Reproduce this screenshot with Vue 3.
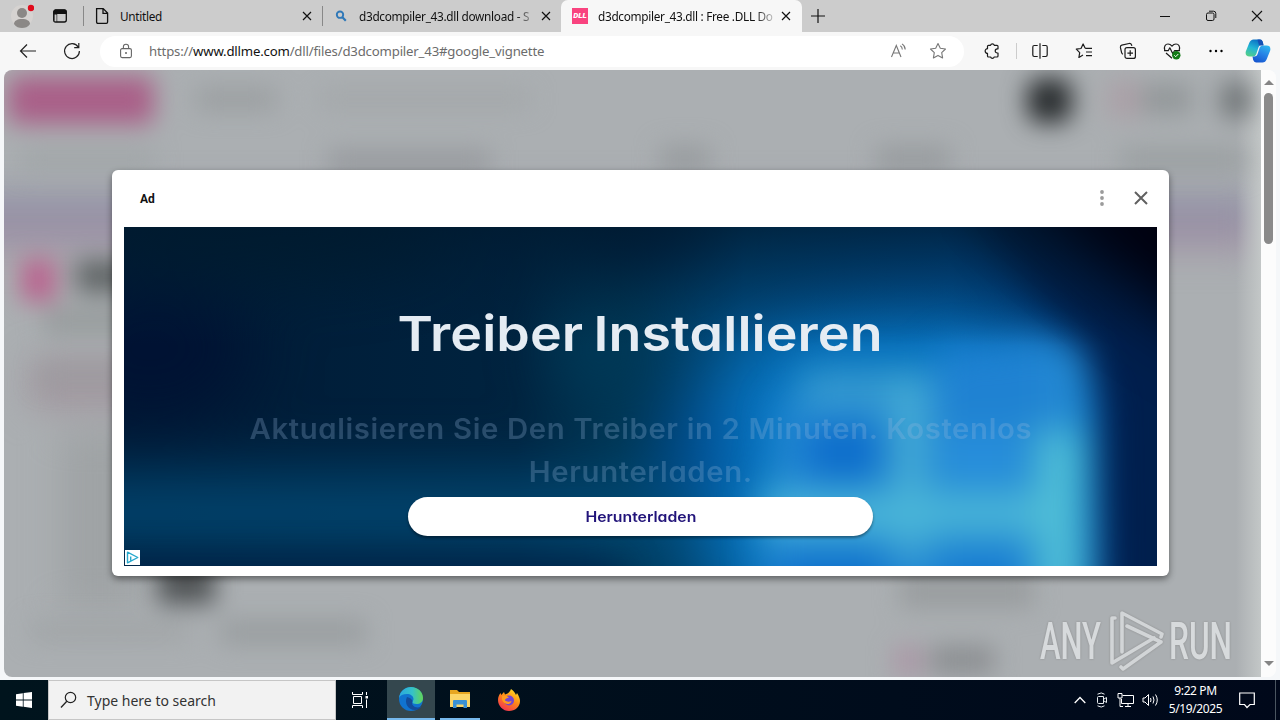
<script setup>
import { ref } from 'vue'

const tabs = ref([
  { id: 1, title: 'Untitled', icon: 'file', active: false },
  { id: 2, title: 'd3dcompiler_43.dll download - S', icon: 'search', active: false },
  { id: 3, title: 'd3dcompiler_43.dll : Free .DLL Do', icon: 'dll', active: true }
])

const adOpen = ref(true)

function closeTab(id) {
  tabs.value = tabs.value.filter(t => t.id !== id)
}
</script>

<template>
  <div class="desktop">
    <header class="tabbar">
      <div class="profile">
        <svg width="24" height="26" viewBox="0 0 24 26">
          <circle cx="12" cy="13" r="11" fill="#d6d3d1" />
          <circle cx="12" cy="10" r="5" fill="#8b8886" />
          <path d="M4 21c0-3 3-5 8-5s8 2 8 5c-2 3-5 4-8 4s-6-1-8-4z" fill="#8b8886" />
          <circle cx="21" cy="5" r="3.2" fill="#e00b1c" />
        </svg>
      </div>
      <svg class="workspaces" width="16" height="16" viewBox="0 0 16 16">
        <rect x="1.7" y="2" width="12.6" height="12" rx="2" fill="none" stroke="#111" stroke-width="1.3" />
        <path d="M1.5 3.5q0-2 2-2h9q2 0 2 2V6h-13zM2 6h3.2v8H3.5Q2 14 2 12z" fill="#111" />
        <path d="M2.6 6.5h2v6.8h-2z" fill="#ccc" />
      </svg>
      <div class="tab-divider"></div>
      <div v-for="tab in tabs" :key="tab.id" class="tab" :class="[tab.icon, { active: tab.active }]">
        <svg v-if="tab.icon === 'file'" class="tab-icon" width="16" height="18" viewBox="0 0 16 18">
          <path d="M2.6 1.6h6.6l4.4 4.5v9q0 1.3-1.3 1.3H3.9q-1.3 0-1.3-1.3zM9 1.8v4.5h4.4" fill="none" stroke="#111" stroke-width="1.3" />
        </svg>
        <svg v-else-if="tab.icon === 'search'" class="tab-icon" width="16" height="16" viewBox="0 0 16 16">
          <circle cx="7" cy="6.7" r="3.2" fill="none" stroke="#2f78b8" stroke-width="1.9" />
          <path d="M9.4 9.2l3.4 3.5" stroke="#2f78b8" stroke-width="2.2" />
        </svg>
        <span v-else class="tab-icon dll-badge">DLL</span>
        <span class="tab-title">{{ tab.title }}</span>
        <button class="tab-close" @click="closeTab(tab.id)">
          <svg width="10" height="10" viewBox="0 0 10 10"><path d="M1 1l8 8M9 1L1 9" stroke="#111" stroke-width="1.2" /></svg>
        </button>
      </div>
      <svg class="new-tab" width="14" height="14" viewBox="0 0 14 14"><path d="M7 0v14M0 7h14" stroke="#111" stroke-width="1.2" /></svg>
      <div class="window-controls">
        <svg width="12" height="12" viewBox="0 0 12 12"><path d="M1 6.5h10" stroke="#111" /></svg>
        <svg width="12" height="12" viewBox="0 0 12 12">
          <rect x="1.5" y="3" width="7.5" height="7.5" rx="1.5" fill="none" stroke="#111" />
          <path d="M4 1.2h4.5q2.3 0 2.3 2.3V8" fill="none" stroke="#111" />
        </svg>
        <svg width="12" height="12" viewBox="0 0 12 12"><path d="M1 1l10 10M11 1L1 11" stroke="#111" stroke-width="1.1" /></svg>
      </div>
    </header>

    <nav class="toolbar">
      <svg class="nav-back" width="18" height="16" viewBox="0 0 18 16"><path d="M17 8H1.5M8 1.5L1.5 8 8 14.5" fill="none" stroke="#222" stroke-width="1.2" /></svg>
      <svg class="nav-reload" width="18" height="18" viewBox="0 0 18 18"><path d="M15.3 5.2A7.4 7.4 0 1 0 16.4 9M15.8 1v4.6h-4.6" fill="none" stroke="#222" stroke-width="1.2" /></svg>
      <div class="address">
        <svg class="lock" width="14" height="16" viewBox="0 0 14 16">
          <rect x="1.6" y="5.6" width="10.8" height="9" rx="1.5" fill="none" stroke="#666" stroke-width="1.1" />
          <path d="M4.4 5.6V3.8a2.6 2.6 0 0 1 5.2 0v1.8" fill="none" stroke="#666" stroke-width="1.1" />
          <circle cx="7" cy="10" r="1" fill="#666" />
        </svg>
        <span class="url">https://<b>www.dllme.com</b>/dll/files/d3dcompiler_43#google_vignette</span>
        <svg class="read-aloud" width="17" height="16" viewBox="0 0 17 16">
          <path d="M1.5 14L6.3 2.5 11 14M3.2 10h6.2M10.3 2.8q2 1.2 2 3.6M12 .9q3.2 2 3.2 5.6" fill="none" stroke="#777" stroke-width="1.1" />
        </svg>
        <svg width="18" height="18" viewBox="0 0 18 18">
          <path d="M9 1.5l2.3 4.8 5.2.7-3.8 3.7.9 5.2L9 13.4l-4.6 2.5.9-5.2L1.5 7l5.2-.7z" fill="none" stroke="#777" stroke-width="1.1" stroke-linejoin="round" />
        </svg>
      </div>
      <div class="tools">
        <svg width="18" height="18" viewBox="0 0 18 18">
          <path d="M5.5 3.3h2a2 2 0 0 1 3.8 0h2.7q1 0 1 1v2.5h-.7a2 2 0 0 0 0 4.2h.7v3q0 1-1 1h-2.8a1.9 1.9 0 0 1-3.6 0H5.5q-1 0-1-1v-2.6a2.1 2.1 0 0 1 0-4.7V4.3q0-1 1-1z" fill="none" stroke="#1b1b1b" stroke-width="1.2" stroke-linejoin="round" />
        </svg>
        <i class="sep"></i>
        <svg width="18" height="18" viewBox="0 0 18 18">
          <path d="M6.7 3.5H3.2q-1.4 0-1.4 1.4v8.2q0 1.4 1.4 1.4h3.5M11.3 3.5h3.5q1.4 0 1.4 1.4v8.2q0 1.4-1.4 1.4h-3.5M9 1.2v15.6" fill="none" stroke="#1b1b1b" stroke-width="1.2" />
        </svg>
        <svg width="18" height="18" viewBox="0 0 18 18">
          <path d="M10.2 6.2L8.1 2 6 6.5l-4.7.7 3.4 3.4-.8 4.9L8 13.1M10.2 6.3H17M11 10h6M11 13.6h6" fill="none" stroke="#1b1b1b" stroke-width="1.2" stroke-linejoin="round" />
        </svg>
        <svg width="18" height="18" viewBox="0 0 18 18">
          <rect x="6" y="5.6" width="10.4" height="10.8" rx="2" fill="none" stroke="#1b1b1b" stroke-width="1.2" />
          <path d="M11.2 8.3v5.6M8.4 11.1H14M3.9 12.2Q3 11.8 2.6 10.6L1.4 5.4Q1.2 3.6 2.8 3.1L10 1.5q2-.3 2.6 1.4l.2.9" fill="none" stroke="#1b1b1b" stroke-width="1.2" />
        </svg>
        <svg width="18" height="18" viewBox="0 0 18 18">
          <path d="M1.8 8C.6 4.6 2.4 2 5 2q2.3 0 4 2.2Q10.7 2 13 2c2.7 0 4.4 2.6 3.2 6M1 8.7h4.2L6.8 5.8l3 6 1.7-3.1H17M3 11l6 5.2" fill="none" stroke="#1b1b1b" stroke-width="1.2" stroke-linejoin="round" />
          <circle cx="13.3" cy="13.2" r="4.2" fill="#137b16" />
          <path d="M11.3 13.3l1.4 1.4 2.6-2.7" fill="none" stroke="#fff" />
        </svg>
        <svg width="18" height="18" viewBox="0 0 18 18"><circle cx="3.5" cy="9" r="1.2" /><circle cx="9" cy="9" r="1.2" /><circle cx="14.5" cy="9" r="1.2" /></svg>
      </div>
      <svg class="copilot" width="26" height="24" viewBox="0 0 26 24">
        <defs>
          <linearGradient id="cpA" x1="0.6" y1="0" x2="0.2" y2="1"><stop offset="0" stop-color="#0a6fc4" /><stop offset=".5" stop-color="#22b5d6" /><stop offset="1" stop-color="#54cf86" /></linearGradient>
          <linearGradient id="cpB" x1="0.8" y1="0" x2="0.3" y2="1"><stop offset="0" stop-color="#2fb6ee" /><stop offset=".5" stop-color="#2682e6" /><stop offset="1" stop-color="#1656cf" /></linearGradient>
        </defs>
        <path d="M8.5 .5H15q2 0 2.8 2.4L18.5 6h-2.3q-2 0-2.7 2.2l-2.3 7Q10.3 17.5 8 17.5H4.5Q-.2 17.5 .8 12.5L4.2 4Q5.6 .5 8.5 .5z" fill="url(#cpA)" />
        <path d="M17.5 23.5H11q-2 0-2.8-2.4L7.5 17.5h1.8q2.5 0 3.2-2.2l2.3-7Q15.6 6.5 18 6.5h3.5q4.7 0 3.7 5L21.8 20q-1.4 3.5-4.3 3.5z" fill="url(#cpB)" />
        <path d="M12.5 .5H15q2 0 2.8 2.4L18.5 6.5H14z" fill="#1551b5" />
      </svg>
    </nav>

    <main class="viewport">
      <section class="page">
        <!-- out-of-focus page behind the vignette -->
        <svg class="backdrop" width="1257" height="607" viewBox="4 70 1257 607">
          <defs>
            <filter id="soft" x="-20%" y="-100%" width="140%" height="300%" color-interpolation-filters="sRGB"><feGaussianBlur stdDeviation="12.5" /></filter>
            <filter id="soft2" x="-20%" y="-100%" width="140%" height="300%" color-interpolation-filters="sRGB"><feGaussianBlur stdDeviation="18" /></filter>
            <linearGradient id="edge"><stop offset="0" stop-color="#c3c7c7" stop-opacity="0" /><stop offset="1" stop-color="#c3c7c7" /></linearGradient>
          </defs>
          <rect x="4" y="70" width="1257" height="607" fill="#abafb2" />
          <g filter="url(#soft2)">
            <rect x="-60" y="194" width="1320" height="30" fill="#9190a5" />
            <rect x="-60" y="224" width="1320" height="26" fill="#a092a5" />
            <rect x="30" y="360" width="160" height="48" fill="#a1979f" />
            <rect x="60" y="430" width="80" height="180" fill="#9fa3a5" />
          </g>
          <rect x="1236" y="70" width="25" height="607" fill="url(#edge)" />
          <g filter="url(#soft)">
            <rect x="8" y="76" width="146" height="48" rx="8" fill="#a95f88" />
            <rect x="196" y="88" width="80" height="22" fill="#9a9ea0" />
            <rect x="320" y="90" width="210" height="18" fill="#a3a7a9" />
            <rect x="20" y="150" width="135" height="20" fill="#a0a5a7" />
            <rect x="328" y="150" width="162" height="26" fill="#989b9f" />
            <rect x="660" y="146" width="50" height="28" fill="#989c9f" />
            <rect x="876" y="146" width="74" height="28" fill="#989c9f" />
            <rect x="1120" y="148" width="125" height="24" fill="#9a9fa1" />
            <rect x="1027" y="78" width="45" height="45" rx="14" fill="#2a2e30" />
            <rect x="1108" y="80" width="32" height="38" fill="#aba0a7" />
            <rect x="1142" y="84" width="50" height="30" fill="#929799" />
            <rect x="1222" y="83" width="28" height="34" fill="#6c7173" />
            <rect x="21" y="259" width="35" height="42" fill="#b9648f" />
            <rect x="76" y="260" width="110" height="32" fill="#5f6465" />
            <rect x="44" y="306" width="115" height="30" fill="#989d9e" />
            <rect x="40" y="366" width="90" height="18" fill="#9c9b9f" />
            <rect x="158" y="562" width="57" height="42" fill="#515557" />
            <rect x="30" y="622" width="160" height="18" fill="#a0a4a6" />
            <rect x="220" y="620" width="146" height="24" fill="#989d9f" />
            <rect x="900" y="574" width="134" height="34" fill="#999d9f" />
            <rect x="894" y="646" width="28" height="30" fill="#ab97a6" />
            <rect x="930" y="646" width="64" height="28" fill="#8b8e91" />
          </g>
        </svg>

        <article v-if="adOpen" class="vignette">
          <div class="vignette-head">
            <span class="ad-label">Ad</span>
            <svg class="kebab" width="4" height="16" viewBox="0 0 4 16" fill="#9b9b9b"><circle cx="2" cy="2" r="1.9" /><circle cx="2" cy="8" r="1.9" /><circle cx="2" cy="14" r="1.9" /></svg>
            <button class="ad-close" @click="adOpen = false">
              <svg width="14" height="14" viewBox="0 0 14 14"><path d="M1 1l12 12M13 1L1 13" stroke="#606060" stroke-width="2" /></svg>
            </button>
          </div>
          <div class="creative">
            <svg class="artwork" width="1033" height="339" viewBox="124 227 1033 339">
              <defs>
                <linearGradient id="base"><stop offset="0" stop-color="#001a35" /><stop offset=".38" stop-color="#00233f" /><stop offset=".48" stop-color="#003553" /><stop offset=".6" stop-color="#004c80" /><stop offset=".8" stop-color="#005094" /><stop offset="1" stop-color="#00205a" /></linearGradient>
                <filter id="b35" x="-100%" y="-100%" width="300%" height="300%" color-interpolation-filters="sRGB"><feGaussianBlur stdDeviation="34" /></filter>
                <filter id="b16" x="-50%" y="-50%" width="200%" height="200%" color-interpolation-filters="sRGB"><feGaussianBlur stdDeviation="18" /></filter>
                <linearGradient id="shade" x1="0" y1="0" x2="0" y2="1"><stop offset="0" stop-color="#001a30" stop-opacity=".75" /><stop offset=".35" stop-color="#001f3a" stop-opacity="0" /></linearGradient>
              </defs>
              <rect x="124" y="227" width="1033" height="339" fill="url(#base)" />
              <g filter="url(#b35)">
                <ellipse cx="150" cy="350" rx="100" ry="70" fill="#001233" />
                <ellipse cx="260" cy="230" rx="180" ry="40" fill="#001c2b" />
                <ellipse cx="640" cy="225" rx="80" ry="24" fill="#000d2b" />
                <rect x="40" y="480" width="680" height="66" fill="#014d7a" />
                <ellipse cx="600" cy="350" rx="40" ry="60" fill="#003a58" />
                <polygon points="700,400 780,330 900,310 1000,320 1090,370 1090,600 720,600" fill="#0876c2" />
                <ellipse cx="700" cy="450" rx="30" ry="50" fill="#004a90" />
              </g>
              <g filter="url(#b16)">
                <rect x="60" y="564" width="560" height="40" fill="#00254d" />
                <polygon points="780,400 900,380 1030,335 1085,350 1096,640 755,640" fill="#2489d2" />
                <rect x="800" y="370" width="130" height="38" fill="#379bd0" />
                <rect x="807" y="426" width="72" height="54" fill="#0c6ccb" />
                <rect x="894" y="380" width="32" height="175" fill="#48afd5" />
                <rect x="940" y="345" width="105" height="80" fill="#1f82d2" />
                <rect x="940" y="435" width="80" height="45" fill="#278edc" />
                <rect x="760" y="492" width="320" height="42" fill="#4ab6d8" />
                <rect x="1036" y="430" width="46" height="180" fill="#50bfd6" />
                <rect x="780" y="556" width="105" height="50" fill="#0c6ecb" />
                <rect x="940" y="558" width="80" height="50" fill="#1479d2" />
                <polygon points="950,190 1210,190 1210,640 1112,640 1108,400 1080,335 1030,285" fill="#001f4d" />
              </g>
              <rect x="124" y="227" width="1033" height="339" fill="url(#shade)" />
              <g filter="url(#b35)"><polygon points="990,170 1260,170 1260,370 1150,300" fill="#00000e" /></g>
            </svg>
            <div class="creative-copy">
              <h1>Treiber Installieren</h1>
              <p><span class="line">Aktualisieren Sie Den Treiber in 2 Minuten. Kostenlos</span><span class="line">Herunterladen.</span></p>
              <button class="cta"><span>Herunterladen</span></button>
            </div>
            <span class="adchoices">
              <svg width="15" height="15" viewBox="0 0 15 15"><path d="M2.5 2.2v10.6L12.8 7.5zM5.7 6.5v4" fill="none" stroke="#27a9cd" stroke-width="1.4" stroke-linejoin="round" /></svg>
            </span>
          </div>
        </article>

        <svg class="watermark" width="200" height="66" viewBox="1036 608 200 66">
          <g fill="#dfe2e4" font-family="Roboto, sans-serif" font-weight="500" font-size="51">
            <text x="1040" y="659" textLength="61" lengthAdjust="spacingAndGlyphs">ANY</text>
            <text x="1169" y="659" textLength="63" lengthAdjust="spacingAndGlyphs">RUN</text>
          </g>
          <g fill="none" stroke="#d9dcde" stroke-width="3.6" stroke-linejoin="round" stroke-linecap="round">
            <path d="M1122 652V613l40 21-1 3M1127 626l34 16-38 27-2-2" />
            <path d="M1115 618l-3 0V663l42-25" />
          </g>
        </svg>
      </section>
      <div class="scrollbar">
        <i class="arrow up"></i>
        <i class="thumb"></i>
        <i class="arrow down"></i>
      </div>
    </main>

    <footer class="taskbar">
      <div class="start">
        <svg width="16" height="16" viewBox="0 0 16 16" fill="#fff"><path d="M0 2.2l6.8-1v6.4H0zM7.6 1.1L16 0v7.6H7.6zM0 8.4h6.8v6.4L0 13.8zM7.6 8.4H16V16l-8.4-1.2z" /></svg>
      </div>
      <div class="search-box">
        <svg width="17" height="18" viewBox="0 0 17 18"><circle cx="10.5" cy="6.5" r="5.2" fill="none" stroke="#222" stroke-width="1.2" /><path d="M6.8 10.3L1 16.5" stroke="#222" stroke-width="1.3" /></svg>
        <span>Type here to search</span>
      </div>
      <div class="task">
        <svg width="18" height="16" viewBox="0 0 18 16" fill="none" stroke="#fff">
          <path d="M1.5 0v2.5h10V0M1.5 16v-2.5h10V16M2.5 4.5h8v7h-8zM15.5 0v3M15.5 7.5V16" /><rect x="14.5" y="4" width="2.5" height="2.5" fill="#fff" stroke="none" />
        </svg>
      </div>
      <div class="task edge current">
        <svg width="26" height="26" viewBox="0 0 26 26">
          <defs><linearGradient id="edgeTop"><stop offset="0" stop-color="#2aa7df" /><stop offset=".55" stop-color="#35c1c9" /><stop offset="1" stop-color="#63d557" /></linearGradient></defs>
          <circle cx="13" cy="13" r="12" fill="#1073cf" />
          <path d="M1 12C2 5 7 1 13 1c7 0 12 5 12 11 0 4-3 6-6.5 6-3 0-4-1-4-2 0-.8 1-1.2 1-3 0-3-3-5-6.5-5C5 8 2 9.5 1 12z" fill="url(#edgeTop)" />
          <path d="M9 11c-3 6 1 13 8 13 3 0 5-1.5 6.5-3.5C18 23 12.5 20 14.5 15q-1-3-5.5-4z" fill="#134c9a" />
        </svg>
      </div>
      <div class="task explorer running">
        <svg width="22" height="20" viewBox="0 0 22 20">
          <path d="M1 1h7l2 2h11v15H1z" fill="#e7a621" /><path d="M1 5h20v13H1z" fill="#fcd567" />
          <path d="M4 12q0-1 1-1h12q1 0 1 1v7h-3.5v-3.5h-7V19H4z" fill="#3b91d3" />
        </svg>
      </div>
      <div class="task firefox">
        <svg width="24" height="24" viewBox="0 0 24 24">
          <defs><linearGradient id="fox" x1=".8" y1="0" x2=".2" y2="1"><stop offset="0" stop-color="#ffe226" /><stop offset=".45" stop-color="#ff8a16" /><stop offset="1" stop-color="#f22c56" /></linearGradient></defs>
          <path d="M14 1c3 2 4 4 5 6l1-2c2 3 3 6 3 8 0 6-5 10-11 10S1 18 1 12c0-3 1-5 2.5-7l.8 2L7 4l1 2.5c2-.5 4.5-1.5 6-5.5z" fill="url(#fox)" />
          <circle cx="12" cy="12.5" r="5" fill="#7445d0" /><path d="M5 8c3-1 5 0 7 1.5-2 1-4 1-4 2.8 2 2 5 1.5 6.5.5 0 4-7 5-9.5-1z" fill="#ff9c1e" />
        </svg>
      </div>
      <div class="tray">
        <svg width="12" height="8" viewBox="0 0 12 8"><path d="M.7 7L6 1.5 11.3 7" fill="none" stroke="#fff" stroke-width="1.3" /></svg>
        <svg width="14" height="16" viewBox="0 0 14 16" fill="none" stroke="#e8edf0"><path d="M4.5 4.5h5v7h-5q-1 0-1-1v-5q0-1 1-1zM10 7l2.5-1.5v5L10 9M3.5 2.2q4-2.5 7 0M3.5 13.8q4 2.5 7 0" /></svg>
        <svg width="17" height="16" viewBox="0 0 17 16" fill="none" stroke="#fff"><path d="M5.5 3.5h11v8h-12V7M8 14.5h6M11 11.5v3M1 1.5h4V6H1zM3 6v8.5h3" /></svg>
        <svg width="17" height="14" viewBox="0 0 17 14" fill="none" stroke="#fff"><path d="M1 5h2l3.5-3.5v11L3 9H1zM8.5 5q1 2 0 4M11 3.5q2 3.5 0 7M13.5 1.5q3.5 5.5 0 11" /></svg>
        <div class="clock"><span>9:22 PM</span><span>5/19/2025</span></div>
        <svg class="notify" width="16" height="17" viewBox="0 0 16 17"><path d="M.7 1h14.6v11.5H11L8 15.5l-2.5-3H.7z" fill="none" stroke="#fff" stroke-width="1.2" /></svg>
      </div>
    </footer>
  </div>
</template>

<style>
body {
  margin: 0;
  overflow: hidden;
}
</style>

<style scoped>
.desktop {
  width: 1280px;
  height: 720px;
  display: flex;
  flex-direction: column;
  overflow: hidden;
  background: #f5f7f9;
  font-family: "Noto Sans", "Open Sans", sans-serif;
  color: #111;
}

svg {
  display: block;
  flex-shrink: 0;
}

button {
  border: none;
  background: none;
  padding: 0;
  font-family: inherit;
  cursor: pointer;
}

.tabbar {
  height: 32px;
  display: flex;
  align-items: center;
  background: #ccc;
  flex-shrink: 0;
}

.profile {
  margin-left: 10px;
  width: 24px;
}

.workspaces {
  margin-left: 18px;
}

.tab-divider {
  width: 1px;
  height: 20px;
  margin-left: 15px;
  background: #888;
}

.tab {
  width: 239px;
  height: 32px;
  box-sizing: border-box;
  display: flex;
  align-items: center;
  padding: 0 10px 0 11px;
  font-size: 11.8px;
}

.tab.file {
  width: 238px;
  padding-left: 10px;
}

/* short divider on the left of the second tab */
.tab.search {
  background: linear-gradient(#888, #888) no-repeat 0 50% / 1px 20px;
}

.tab.active {
  width: 241px;
  padding-right: 12px;
  background: #f7f7f7;
  border-radius: 7px 7px 0 0;
}

.tab-icon {
  width: 16px;
  margin-right: 10px;
}

.dll-badge {
  height: 16px;
  background: #f9437f;
  color: #fff;
  font: italic 900 8px/16px Roboto, sans-serif;
  text-align: center;
  flex-shrink: 0;
}

.tab-title {
  flex: 1;
  white-space: nowrap;
  letter-spacing: -0.3px;
}

.search .tab-title,
.active .tab-title {
  mask-image: linear-gradient(90deg, #000 90%, transparent 103%);
}

.tab-close {
  margin-left: 8px;
}

.new-tab {
  margin-left: 9px;
}

.window-controls {
  margin: 0 17px 0 auto;
  display: flex;
  gap: 34px;
}

.toolbar {
  height: 38px;
  display: flex;
  align-items: center;
  background: #f7f7f7;
  flex-shrink: 0;
}

.nav-back {
  margin-left: 19px;
}

.nav-reload {
  margin-left: 26px;
}

.address {
  width: 864px;
  height: 31px;
  margin-left: 19px;
  box-sizing: border-box;
  display: flex;
  align-items: center;
  background: #fff;
  border-radius: 16px;
  padding: 0 17px 0 19px;
}

.url {
  flex: 1;
  margin-left: 16px;
  font-size: 13.2px;
  letter-spacing: -0.18px;
  color: #6c6c6c;
  white-space: nowrap;
}

.url b {
  color: #111;
  font-weight: 400;
}

.read-aloud {
  margin-right: 22px;
}

.tools {
  display: flex;
  align-items: center;
  margin-left: 19px;
  gap: 26px;
}

.sep {
  width: 1px;
  height: 16px;
  background: #ccc;
  margin: 0 -12px 0 -11px;
}

.copilot {
  margin-left: 20px;
}

.viewport {
  height: 607px;
  display: flex;
  margin: 0 4px 3px;
  flex-shrink: 0;
  border-radius: 8px;
  overflow: hidden;
  background: #fcfcfc;
}

.page {
  position: relative;
  width: 1257px;
  height: 607px;
  flex-shrink: 0;
}

.backdrop {
  position: absolute;
  top: 0;
  left: 0;
}

.vignette {
  position: relative;
  width: 1057px;
  height: 406px;
  box-sizing: border-box;
  top: 100px;
  left: 108px;
  padding: 0 12px 10px;
  background: #fff;
  border-radius: 6px;
  box-shadow: 0 3px 7px rgba(0, 0, 0, 0.45);
}

.vignette-head {
  height: 57px;
  box-sizing: border-box;
  display: flex;
  align-items: center;
  padding: 0 9px 1px 16px;
}

.ad-label {
  flex: 1;
  padding-top: 1px;
  font: bold 12px Roboto, sans-serif;
}

.kebab {
  margin-right: 30px;
}

.creative {
  position: relative;
  width: 1033px;
  height: 339px;
  overflow: hidden;
}

.artwork {
  position: absolute;
  inset: 0;
}

.creative-copy {
  position: relative;
  display: flex;
  flex-direction: column;
  align-items: center;
  font-family: Inter, sans-serif;
  font-feature-settings: "cv11";
}

h1 {
  margin: 77px 0 0;
  font-size: 48.5px;
  line-height: 60px;
  font-weight: 600;
  color: #e5ecf3;
  letter-spacing: 0.1px;
  word-spacing: -3px;
  white-space: nowrap;
  transform: scaleX(1.107);
}

.creative-copy p {
  margin: 44px 0 0;
  text-align: center;
  font-size: 28px;
  line-height: 43px;
  font-weight: 600;
  color: rgba(150, 185, 220, 0.27);
  letter-spacing: 0.6px;
  white-space: nowrap;
  transform: scaleX(1.047);
}

.line {
  display: block;
}

.cta {
  width: 465px;
  height: 39px;
  margin-top: 3px;
  background: #fff;
  border-radius: 20px;
  color: #22147a;
  font-size: 14.5px;
  font-weight: 600;
  font-feature-settings: inherit;
  box-shadow: 0 2px 3px rgba(0, 0, 0, 0.4);
}

.cta span {
  display: inline-block;
  transform: scaleX(1.09);
}

.adchoices {
  position: absolute;
  left: 1px;
  bottom: 1px;
  background: #fff;
}

.watermark {
  position: absolute;
  right: 25px;
  bottom: 3px;
  overflow: visible;
  filter: drop-shadow(0 0 1px #888);
  opacity: 0.85;
}

.scrollbar {
  width: 15px;
  display: flex;
  flex-direction: column;
  align-items: center;
  background: #fcfcfc;
}

.arrow {
  border: 5px solid transparent;
}

.arrow.up {
  margin-top: 5px;
  border-bottom-color: #858585;
}

.arrow.down {
  margin: auto 0 11px;
  border-top-color: #858585;
  border-bottom-width: 0;
}

.thumb {
  width: 9px;
  height: 151px;
  margin-top: 8px;
  border-radius: 5px;
  background: #8a8a8a;
}

.taskbar {
  height: 40px;
  display: flex;
  flex-shrink: 0;
  background: linear-gradient(90deg, #00141d, #000c1c 70%, #00081a);
  color: #fff;
}

.start {
  width: 48px;
  display: flex;
  align-items: center;
  justify-content: center;
}

.search-box {
  width: 288px;
  box-sizing: border-box;
  display: flex;
  align-items: center;
  gap: 10px;
  padding-left: 11px;
  background: #f2f2f2;
  border: 1px solid #c6c6c6;
  color: #333;
  font-size: 14px;
}

.task {
  width: 48px;
  box-sizing: border-box;
  display: flex;
  align-items: center;
  justify-content: center;
}

.edge {
  margin-left: 3px;
}

.current {
  background: #34474e;
  border-bottom: 2px solid #76b9ed;
}

.explorer {
  width: 40px;
  margin: 0 5px;
}

.running {
  border-bottom: 2px solid #76b9ed;
}

.tray {
  margin-left: auto;
  padding-right: 20px;
  margin-right: 4px;
  border-right: 1px solid #4a5560;
  display: flex;
  align-items: center;
  gap: 8.5px;
}

.clock {
  display: flex;
  flex-direction: column;
  align-items: center;
  width: 56px;
  font-size: 12px;
  line-height: 18px;
  letter-spacing: -0.4px;
}

.notify {
  margin-left: 7px;
}
</style>
